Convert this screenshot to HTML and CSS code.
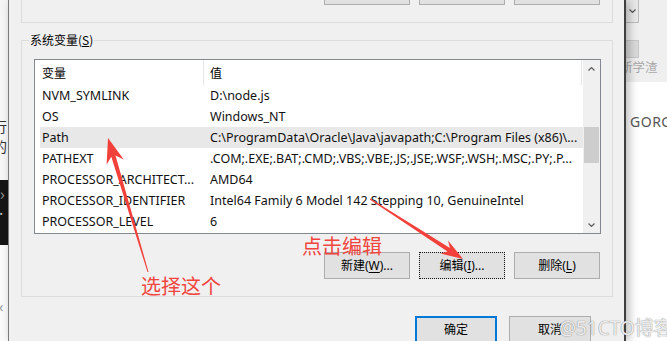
FILE: index.html
```html
<!DOCTYPE html>
<html>
<head>
<meta charset="utf-8">
<link rel="stylesheet" href="styles.css">
</head>
<body>
<div class="screen">
  <div class="bg-left">
    <div class="bl-top"></div>
    <div class="bl-ch">行</div>
    <div class="bl-ch">的</div>
    <div class="bl-gap"></div>
    <div class="bl-dark"><span class="bl-gt">›</span><span class="bl-dot">·</span></div>
    <div class="bl-rest"><span class="bl-lt">‹</span></div>
  </div>

  <div class="dialog">
    <div class="group-user">
      <div class="btn"></div>
      <div class="btn"></div>
      <div class="btn"></div>
    </div>

    <fieldset class="group-sys">
      <legend>系统变量(<u>S</u>)</legend>
      <div class="sys-body">
        <div class="list">
          <div class="list-main">
            <div class="hdr">
              <div class="c1">变量</div>
              <div class="c2">值</div>
            </div>
            <div class="row"><div class="c1">NVM_SYMLINK</div><div class="c2">D:\node.js</div></div>
            <div class="row"><div class="c1">OS</div><div class="c2">Windows_NT</div></div>
            <div class="row sel"><div class="c1">Path</div><div class="c2">C:\ProgramData\Oracle\Java\javapath;C:\Program Files (x86)\...</div></div>
            <div class="row"><div class="c1">PATHEXT</div><div class="c2">.COM;.EXE;.BAT;.CMD;.VBS;.VBE;.JS;.JSE;.WSF;.WSH;.MSC;.PY;.P...</div></div>
            <div class="row"><div class="c1">PROCESSOR_ARCHITECT...</div><div class="c2">AMD64</div></div>
            <div class="row"><div class="c1">PROCESSOR_IDENTIFIER</div><div class="c2">Intel64 Family 6 Model 142 Stepping 10, GenuineIntel</div></div>
            <div class="row"><div class="c1">PROCESSOR_LEVEL</div><div class="c2">6</div></div>
          </div>
          <div class="vscroll">
            <div class="sb-arrow"><svg width="7" height="4" viewBox="0 0 7 4"><path d="M0.5 3.5 L3.5 0.6 L6.5 3.5" fill="none" stroke="#606060" stroke-width="1.3"/></svg></div>
            <div class="sb-track"><div class="sb-thumb"></div></div>
            <div class="sb-arrow"><svg width="7" height="4" viewBox="0 0 7 4"><path d="M0.5 0.5 L3.5 3.4 L6.5 0.5" fill="none" stroke="#606060" stroke-width="1.3"/></svg></div>
          </div>
        </div>
        <div class="btnrow">
          <div class="btn">新建(<u>W</u>)...</div>
          <div class="btn focus">编辑(<u>I</u>)...</div>
          <div class="btn">删除(<u>L</u>)</div>
        </div>
      </div>
    </fieldset>

    <div class="okrow">
      <div class="btn ok">确定</div>
      <div class="btn cancel">取消</div>
    </div>
  </div>

  <div class="bg-right">
    <div class="br-top">
      <div class="br-drop"><svg width="7" height="4" viewBox="0 0 7 4"><path d="M0.5 0.5 L3.5 3.4 L6.5 0.5" fill="none" stroke="#555" stroke-width="1.2"/></svg></div>
      <div class="br-box"></div>
      <div class="br-text">新学渣</div>
    </div>
    <div class="br-bottom">
      <div class="br-gorg">GORG</div>
    </div>
  </div>
</div>

<svg class="anno" width="667" height="341" viewBox="0 0 667 341">
  <polygon fill="#f2403a" points="148.5,271.9 115.5,155.6 123.8,159.4 108,138 106.6,164.6 111.3,156.8 147.5,272.1"/>
  <polygon fill="#f2403a" points="369.7,199.4 447.5,251.6 440.5,253.5 463,259 448.0,240.5 449.9,247.95 370.3,198.6"/>
</svg>
<div class="note note-edit">点击编辑</div>
<div class="note note-pick">选择这个</div>
<div class="wm">@51CTO博客</div>
</body>
</html>
```

FILE: styles.css
```css
* { box-sizing: border-box; }
html, body { margin: 0; padding: 0; }
body {
  width: 667px;
  height: 341px;
  overflow: hidden;
  position: relative;
  background: #fff;
  font-family: "Noto Sans", "Noto Sans CJK SC", sans-serif;
  color: #000;
}
.screen { display: flex; height: 341px; }

/* left background strip */
.bg-left {
  width: 8px; flex: none; background: #f6f6f6;
  display: flex; flex-direction: column; overflow: hidden;
}
.bl-top { height: 116px; flex: none; }
.bl-ch {
  height: 20px; flex: none; margin-left: -7px; white-space: nowrap;
  font-family: "Noto Sans CJK SC", sans-serif; font-size: 14px; line-height: 20px; color: #333;
}
.bl-gap { height: 24px; flex: none; }
.bl-dark {
  height: 65px; flex: none; background: #151515; color: #888;
  display: flex; flex-direction: column; font-size: 16px; line-height: 20px;
}
.bl-gt { margin-left: 0; padding-top: 4px; }
.bl-dot { color: #bbb; margin-left: -1px; }
.bl-rest { flex: 1; background: #fafafa; padding-top: 52px; color: #999; font-size: 14px; }
.bl-lt { margin-left: -1px; }

/* dialog */
.dialog {
  width: 618px; flex: none; height: 341px;
  background: #f0f0f0;
  border-left: 1px solid #7a7a7a;
  border-right: 2px solid #3f3f3f;
  position: relative; z-index: 1;
  box-shadow: 3px 0 9px rgba(0,0,0,0.28);
  display: flex; flex-direction: column;
}
.btn {
  width: 86px; height: 27px; flex: none;
  background: #e1e1e1; border: 1px solid #adadad;
  font-family: "Noto Sans", "Noto Sans CJK SC", sans-serif;
  font-size: 12px; line-height: 25px; text-align: center; color: #000;
}
.btn u { text-underline-offset: 2px; }
.btn.focus { border: 1px dotted #111; outline: none; }

.group-user {
  margin: -31px 0 0 12px; width: 592px; flex: none;
  border: 1px solid #dcdcdc;
  padding: 8px 12px 17px 0;
  display: flex; justify-content: flex-end; gap: 9px;
}

.group-sys {
  margin: 10px 0 0 12px; width: 592px; flex: none;
  border: 1px solid #dcdcdc; padding: 0; min-width: 0;
}
.group-sys legend {
  margin-left: 7px; padding: 0 1px;
  font-family: "Noto Sans CJK SC", sans-serif; font-size: 12px; line-height: 14px; color: #000;
}
.sys-body { padding: 12px 11px 17px 12px; }

.list {
  width: 567px; height: 175px;
  border: 1px solid #828790; background: #fff;
  display: flex;
}
.list-main { flex: 1; min-width: 0; display: flex; flex-direction: column; }
.hdr { height: 25px; flex: none; display: flex; font-family: "Noto Sans CJK SC", sans-serif; font-size: 12px; }
.hdr .c1 { width: 169px; padding-left: 7px; border-right: 1px solid #e5e5e5; line-height: 25px; }
.hdr .c2 { width: 378px; padding-left: 6px; border-right: 1px solid #e5e5e5; line-height: 25px; }

.row {
  height: 21px; flex: none; margin-left: 5px; display: flex;
  font-size: 12.5px; line-height: 21px; color: #111;
}
.row.sel { background: #e8e8e8; }
.row .c1 { width: 164px; flex: none; padding-left: 2px; white-space: nowrap; overflow: hidden; }
.row .c2 { width: 377px; flex: none; padding-left: 6px; white-space: nowrap; overflow: hidden; }

.vscroll { width: 17px; flex: none; background: #f0f0f0; display: flex; flex-direction: column; }
.sb-arrow { height: 17px; flex: none; display: flex; align-items: center; justify-content: center; }
.sb-track { flex: 1; }
.sb-thumb { margin: 50px 1px 0; height: 36px; background: #cdcdcd; }

.btnrow {
  margin-top: 18px; padding-right: 1px;
  display: flex; justify-content: flex-end; gap: 9px;
}

.okrow {
  margin-top: 19px; padding-right: 33px;
  display: flex; justify-content: flex-end; gap: 12px;
}
.btn.ok { width: 82px; border: 2px solid #0078d7; line-height: 24px; }
.btn.cancel { width: 82px; }

/* right background strip */
.bg-right { flex: 1; display: flex; flex-direction: column; overflow: hidden; }
.br-top { height: 82px; flex: none; background: #efefef; display: flex; flex-direction: column; }
.br-drop {
  width: 13px; height: 23px; flex: none;
  background: #e9e9e9; border: 1px solid #bdbdbd; border-left: none; border-top: none;
  display: flex; align-items: center; justify-content: center; padding-left: 1px;
}
.br-box {
  width: 13px; height: 18px; flex: none; margin-top: 17px;
  background: #dadada; border: 1px solid #c8c8c8; border-left: none;
}
.br-text {
  margin-left: -6px; padding-top: 1px; white-space: nowrap;
  font-family: "Noto Sans CJK SC", sans-serif; font-size: 12.5px; line-height: 16px; color: #a8a8a8;
}
.br-bottom { flex: 1; background: #fff; padding: 30px 0 0 4px; }
.br-gorg { font-size: 14px; line-height: 20px; color: #555; letter-spacing: 0.5px; }

/* annotations overlay */
.anno { position: absolute; left: 0; top: 0; pointer-events: none; z-index: 5; }
.note {
  position: absolute; z-index: 5;
  font-family: "Noto Sans CJK SC", sans-serif; font-size: 20px; line-height: 24px;
  color: #f0453e; white-space: nowrap;
}
.note-edit { left: 302px; top: 234px; }
.note-pick { left: 141px; top: 274px; }
.wm {
  position: absolute; z-index: 6; left: 559px; top: 316px;
  font-family: "Noto Sans", "Noto Sans CJK SC", sans-serif; font-size: 19px; line-height: 24px;
  color: rgba(250,250,250,0.9);
  text-shadow: 0 0 1px rgba(120,120,120,0.8), 0 0 1px rgba(120,120,120,0.6);
  white-space: nowrap;
}
```
